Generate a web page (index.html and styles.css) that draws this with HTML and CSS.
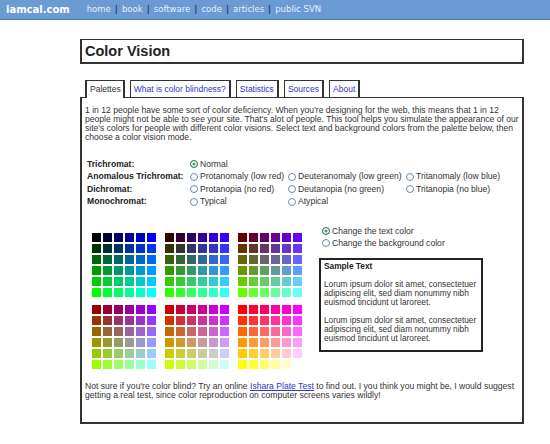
FILE: index.html
```html
<!DOCTYPE html>
<html lang="en">
<head>
<meta charset="utf-8">
<title>Color Vision - iamcal.com</title>
<link rel="stylesheet" href="styles.css">
</head>
<body>
<header class="topbar">
  <span class="logo">iamcal.com</span>
  <nav class="nav">
    <a href="#">home</a><span class="sep">|</span><a href="#">book</a><span class="sep">|</span><a href="#">software</a><span class="sep">|</span><a href="#">code</a><span class="sep">|</span><a href="#">articles</a><span class="sep">|</span><a href="#">public SVN</a>
  </nav>
</header>

<main class="page">
  <div class="title-box"><h1>Color Vision</h1></div>

  <div class="tabs">
    <span class="tab active">Palettes</span>
    <a class="tab" href="#">What is color blindness?</a>
    <a class="tab" href="#">Statistics</a>
    <a class="tab" href="#">Sources</a>
    <a class="tab" href="#">About</a>
  </div>

  <section class="panel">
    <p class="intro">1 in 12 people have some sort of color deficiency. When you're designing for the web, this means that 1 in 12 people might not be able to see your site. That's alot of people. This tool helps you simulate the appearance of our site's colors for people with different color visions. Select text and background colors from the palette below, then choose a color vision mode.</p>

    <div class="modes">
      <div class="mode-label">Trichromat:</div>
      <label class="opt"><input type="radio" name="mode" checked>Normal</label>
      <span></span><span></span>

      <div class="mode-label">Anomalous Trichromat:</div>
      <label class="opt"><input type="radio" name="mode">Protanomaly (low red)</label>
      <label class="opt"><input type="radio" name="mode">Deuteranomaly (low green)</label>
      <label class="opt"><input type="radio" name="mode">Tritanomaly (low blue)</label>

      <div class="mode-label">Dichromat:</div>
      <label class="opt"><input type="radio" name="mode">Protanopia (no red)</label>
      <label class="opt"><input type="radio" name="mode">Deutanopia (no green)</label>
      <label class="opt"><input type="radio" name="mode">Tritanopia (no blue)</label>

      <div class="mode-label">Monochromat:</div>
      <label class="opt"><input type="radio" name="mode">Typical</label>
      <label class="opt"><input type="radio" name="mode">Atypical</label>
      <span></span>
    </div>

    <div class="workspace">
      <div class="palettes" id="palettes"></div>
      <div class="side">
        <label class="opt"><input type="radio" name="target" checked>Change the text color</label>
        <label class="opt"><input type="radio" name="target">Change the background color</label>
        <div class="sample">
          <div class="sample-title">Sample Text</div>
          <p>Lorum ipsum dolor sit amet, consectetuer adipiscing elit, sed diam nonummy nibh euismod tincidunt ut laroreet.</p>
          <p>Lorum ipsum dolor sit amet, consectetuer adipiscing elit, sed diam nonummy nibh euismod tincidunt ut laroreet.</p>
        </div>
      </div>
    </div>

    <p class="note">Not sure if you're color blind? Try an online <a href="#">Ishara Plate Test</a> to find out. I you think you might be, I would suggest getting a real test, since color reproduction on computer screens varies wildly!</p>
  </section>
</main>
<script src="script.js"></script>
</body>
</html>
```

FILE: styles.css
```css
* { box-sizing: border-box; }

body {
  margin: 0;
  background: #fff;
  color: #333;
  font-family: "Liberation Sans", Arial, sans-serif;
  font-size: 8.6px;
  line-height: 9px;
}

.topbar {
  display: flex;
  align-items: center;
  height: 20px;
  padding-left: 6px;
  background: #6b9bd2;
  border-bottom: 1px solid #4d79ae;
}

.logo {
  font-family: "DejaVu Sans", Verdana, sans-serif;
  font-weight: bold;
  font-size: 10px;
  color: #fff;
}

.nav {
  margin-left: 17px;
  font-family: "DejaVu Sans", Verdana, sans-serif;
  font-size: 8.5px;
}

.nav a {
  color: #e6eef8;
  text-decoration: none;
}

.nav .sep {
  margin: 0 4px;
  color: #1d3a66;
  font-weight: bold;
}

.page {
  width: 444px;
  margin: 19px 0 0 80px;
}

.title-box {
  height: 25px;
  display: flex;
  align-items: center;
  padding-left: 3px;
  border: 2px solid #333;
  border-top-width: 1px;
}

.title-box h1 {
  margin: 0;
  font-size: 14.5px;
  line-height: 16px;
  font-weight: bold;
  color: #222;
}

.tabs {
  display: flex;
  gap: 5px;
  margin-top: 16px;
  padding-left: 5px;
}

.tab {
  display: block;
  height: 17px;
  padding: 0 3px;
  font-size: 8.5px;
  line-height: 16px;
  color: #3333cc;
  text-decoration: none;
  background: #fff;
  border: 1px solid #333;
  border-right-width: 2px;
  border-bottom: 0;
}

.tab.active {
  position: relative;
  z-index: 1;
  height: 18px;
  margin-bottom: -1px;
  padding: 0 2px 0 3px;
  color: #333;
  border-left-width: 2px;
}

.panel {
  height: 327px;
  padding: 8px 1px 0 3px;
  border: 2px solid #333;
  border-top-width: 1px;
}

.intro, .note {
  margin: 0;
}

.modes {
  display: grid;
  grid-template-columns: 103px 98px 118px auto;
  grid-auto-rows: 12.5px;
  align-items: center;
  margin: 16px 0 0 2px;
}

.mode-label {
  font-weight: bold;
  color: #222;
}

.opt {
  display: flex;
  align-items: center;
  white-space: nowrap;
}

.opt input {
  appearance: none;
  -webkit-appearance: none;
  width: 8px;
  height: 8px;
  margin: 0 2px 0 0;
  border: 1px solid #6a8cb0;
  border-radius: 50%;
  background: #fff;
  flex: none;
}

.opt input:checked {
  background: #37a83a;
  box-shadow: inset 0 0 0 1.5px #fff;
  border-color: #4a6a8a;
}

.workspace {
  display: flex;
  align-items: flex-start;
  gap: 17px;
  margin-top: 17px;
}

.palettes {
  display: grid;
  grid-template-columns: repeat(3, 64px);
  column-gap: 9px;
  row-gap: 8px;
  margin: 8px 0 0 7px;
}

.block {
  display: grid;
  grid-template-columns: repeat(6, 9px);
  grid-auto-rows: 9px;
  gap: 2px;
}

.swatch {
  display: block;
}

.side {
  display: flex;
  flex-direction: column;
}

.side .opt {
  height: 12px;
  padding-left: 3px;
}

.sample {
  width: 164px;
  margin-top: 9px;
  padding: 2px 1px 7px 3px;
  font-size: 8.3px;
  border: 2px solid #222;
}

.sample-title {
  font-weight: bold;
  color: #222;
}

.sample p {
  margin: 9px 0 0;
}

.note {
  margin-top: 13px;
}

.note a {
  color: #3333cc;
  text-decoration: underline;
}
```

FILE: script.js
```js
var hex = ['00', '33', '66', '99', 'cc', 'ff'];
var wrap = document.getElementById('palettes');
hex.forEach(function (r) {
  var block = document.createElement('div');
  block.className = 'block';
  hex.forEach(function (g) {
    hex.forEach(function (b) {
      var cell = document.createElement('span');
      cell.className = 'swatch';
      cell.style.background = '#' + r + g + b;
      block.appendChild(cell);
    });
  });
  wrap.appendChild(block);
});
```
